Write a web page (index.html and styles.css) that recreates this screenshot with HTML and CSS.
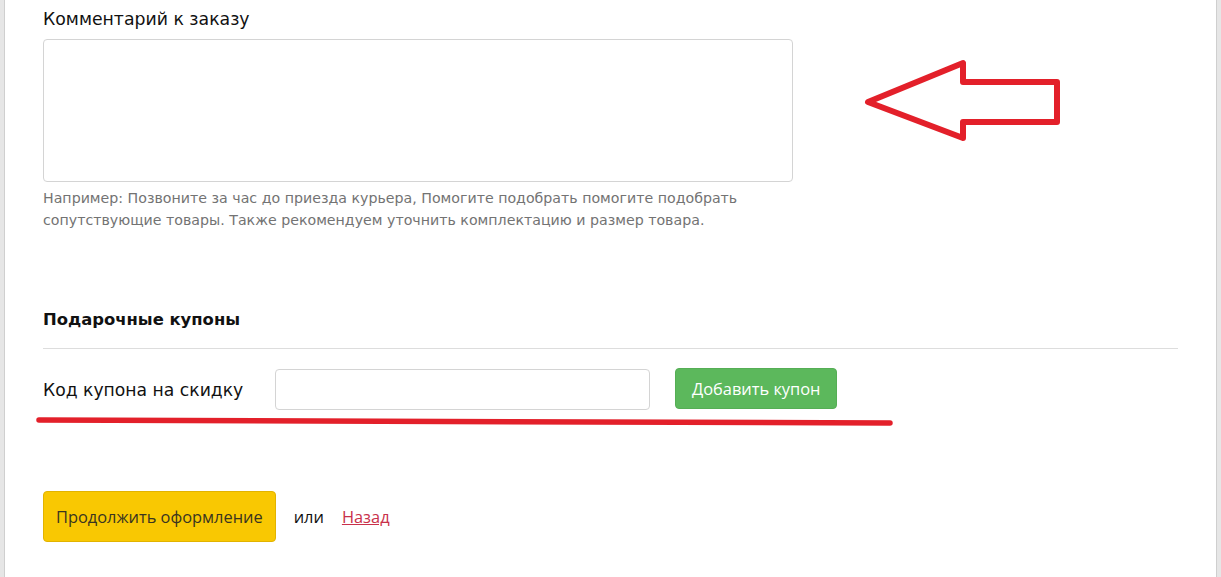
FILE: index.html
```html
<!doctype html>
<html lang="ru">
  <head>
    <meta charset="UTF-8" />
    <meta name="viewport" content="width=device-width, initial-scale=1.0" />
    <title>Оформление заказа</title>
    <link rel="stylesheet" href="styles.css">
  </head>
  <body>
    <div class="page">
      <div class="field">
        <label class="field-label" for="comment">Комментарий к заказу</label>
        <textarea id="comment" class="comment"></textarea>
        <p class="hint">
          Например: Позвоните за час до приезда курьера, Помогите подобрать помогите подобрать
          сопутствующие товары. Также рекомендуем уточнить комплектацию и размер товара.
        </p>
      </div>

      <h3 class="section-title">Подарочные купоны</h3>

      <div class="coupon-row">
        <label class="coupon-label" for="coupon">Код купона на скидку</label>
        <input id="coupon" type="text" class="coupon-input" />
        <button class="btn btn-green">Добавить купон</button>
      </div>

      <div class="actions">
        <button class="btn btn-yellow">Продолжить оформление</button>
        <span class="or">или</span>
        <a href="#" class="back">Назад</a>
      </div>

      <!-- annotations drawn over the page -->
      <svg class="mark-arrow" width="210" height="92" viewBox="0 0 210 92">
        <polygon points="8,47 103,8 103,27 197,27 197,67 103,67 103,83"
                 fill="none" stroke="#e3202a" stroke-width="6" stroke-linejoin="round" />
      </svg>
      <svg class="mark-line" width="866" height="14" viewBox="0 0 866 14">
        <line x1="4" y1="5" x2="855" y2="8" stroke="#e3202a" stroke-width="5.5" stroke-linecap="round" />
      </svg>
    </div>
  </body>
</html>
```

FILE: styles.css
```css
body {
  margin: 0;
  background: #e6e6e6;
  font-family: "DejaVu Sans", Verdana, sans-serif;
  color: #111;
}
.page {
  position: relative;
  margin-left: 4px;
  width: 1135px;
  min-height: 577px;
  padding: 0 38px;
  background: #fff;
  border-left: 1px solid #cfcfcf;
  border-right: 1px solid #cfcfcf;
  box-sizing: content-box;
}
.field {
  padding-top: 8px;
}
.field-label {
  display: block;
  font-size: 17.3px;
  line-height: 22px;
  margin-bottom: 9px;
}
.comment {
  display: block;
  width: 750px;
  height: 143px;
  box-sizing: border-box;
  border: 1px solid #d4d4d4;
  border-radius: 4px;
  resize: none;
  margin: 0;
}
.hint {
  width: 750px;
  margin: 5px 0 0;
  font-size: 14.2px;
  line-height: 22px;
  color: #737373;
}
.section-title {
  margin: 78px 0 0;
  padding-bottom: 17px;
  font-size: 16.4px;
  line-height: 22px;
  border-bottom: 1px solid #ddd;
}
.coupon-row {
  display: flex;
  align-items: center;
  margin-top: 20px;
}
.coupon-label {
  width: 232px;
  font-size: 17.2px;
}
.coupon-input {
  width: 375px;
  height: 41px;
  box-sizing: border-box;
  border: 1px solid #d4d4d4;
  border-radius: 4px;
  margin: 0 25px 0 0;
}
.btn {
  font-family: "Open Sans", "Noto Sans", sans-serif;
  font-size: 16.4px;
  border-radius: 4px;
  cursor: pointer;
}
.btn-green {
  height: 41px;
  margin-top: -2px;
  padding: 0 16px;
  background: #5cb85c;
  border: 1px solid #55ae55;
  color: #fff;
}
.actions {
  display: flex;
  align-items: center;
  margin-top: 81px;
}
.btn-yellow {
  height: 51px;
  padding: 0 12px;
  background: #f9c802;
  border: 1px solid #e2b300;
  color: #3a3520;
}
.or {
  margin-left: 18px;
  font-family: "Open Sans", "Noto Sans", sans-serif;
  font-size: 16.4px;
}
.back {
  margin-left: 18px;
  font-family: "Open Sans", "Noto Sans", sans-serif;
  font-size: 16.4px;
  color: #c9304a;
}
.mark-arrow {
  position: absolute;
  left: 855px;
  top: 55px;
}
.mark-line {
  position: absolute;
  left: 30px;
  top: 415px;
}
```
